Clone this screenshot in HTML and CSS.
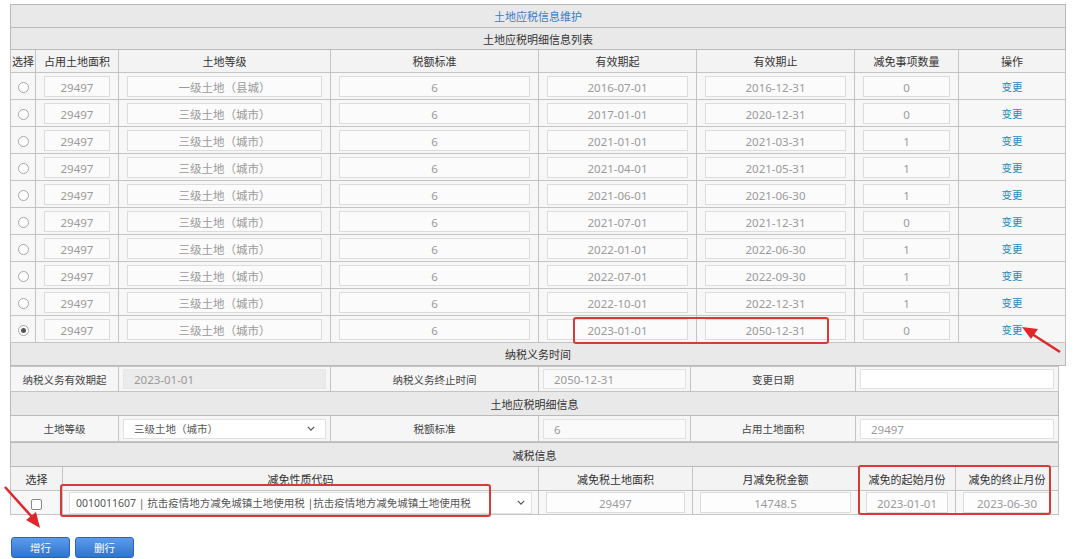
FILE: index.html
```html
<!DOCTYPE html>
<html lang="zh">
<head>
<meta charset="utf-8">
<link rel="stylesheet" href="styles.css">
</head>
<body>
<div class="page">
  <table class="grid top">
    <colgroup>
      <col style="width:25px"><col style="width:83px"><col style="width:212px"><col style="width:208px">
      <col style="width:158px"><col style="width:158px"><col style="width:104px"><col style="width:107px">
    </colgroup>
    <tr class="title"><td colspan="8"><span class="blue">土地应税信息维护</span></td></tr>
    <tr class="sub"><td colspan="8">土地应税明细信息列表</td></tr>
    <tr class="head">
      <td>选择</td><td>占用土地面积</td><td>土地等级</td><td>税额标准</td><td>有效期起</td><td>有效期止</td><td>减免事项数量</td><td>操作</td>
    </tr>
    <tr class="row"><td><span class="radio"></span></td><td><div class="box">29497</div></td><td><div class="box">一级土地（县城）</div></td><td><div class="box">6</div></td><td><div class="box">2016-07-01</div></td><td><div class="box">2016-12-31</div></td><td><div class="box">0</div></td><td><a class="link">变更</a></td></tr>
    <tr class="row"><td><span class="radio"></span></td><td><div class="box">29497</div></td><td><div class="box">三级土地（城市）</div></td><td><div class="box">6</div></td><td><div class="box">2017-01-01</div></td><td><div class="box">2020-12-31</div></td><td><div class="box">0</div></td><td><a class="link">变更</a></td></tr>
    <tr class="row"><td><span class="radio"></span></td><td><div class="box">29497</div></td><td><div class="box">三级土地（城市）</div></td><td><div class="box">6</div></td><td><div class="box">2021-01-01</div></td><td><div class="box">2021-03-31</div></td><td><div class="box">1</div></td><td><a class="link">变更</a></td></tr>
    <tr class="row"><td><span class="radio"></span></td><td><div class="box">29497</div></td><td><div class="box">三级土地（城市）</div></td><td><div class="box">6</div></td><td><div class="box">2021-04-01</div></td><td><div class="box">2021-05-31</div></td><td><div class="box">1</div></td><td><a class="link">变更</a></td></tr>
    <tr class="row"><td><span class="radio"></span></td><td><div class="box">29497</div></td><td><div class="box">三级土地（城市）</div></td><td><div class="box">6</div></td><td><div class="box">2021-06-01</div></td><td><div class="box">2021-06-30</div></td><td><div class="box">1</div></td><td><a class="link">变更</a></td></tr>
    <tr class="row"><td><span class="radio"></span></td><td><div class="box">29497</div></td><td><div class="box">三级土地（城市）</div></td><td><div class="box">6</div></td><td><div class="box">2021-07-01</div></td><td><div class="box">2021-12-31</div></td><td><div class="box">0</div></td><td><a class="link">变更</a></td></tr>
    <tr class="row"><td><span class="radio"></span></td><td><div class="box">29497</div></td><td><div class="box">三级土地（城市）</div></td><td><div class="box">6</div></td><td><div class="box">2022-01-01</div></td><td><div class="box">2022-06-30</div></td><td><div class="box">1</div></td><td><a class="link">变更</a></td></tr>
    <tr class="row"><td><span class="radio"></span></td><td><div class="box">29497</div></td><td><div class="box">三级土地（城市）</div></td><td><div class="box">6</div></td><td><div class="box">2022-07-01</div></td><td><div class="box">2022-09-30</div></td><td><div class="box">1</div></td><td><a class="link">变更</a></td></tr>
    <tr class="row"><td><span class="radio"></span></td><td><div class="box">29497</div></td><td><div class="box">三级土地（城市）</div></td><td><div class="box">6</div></td><td><div class="box">2022-10-01</div></td><td><div class="box">2022-12-31</div></td><td><div class="box">1</div></td><td><a class="link">变更</a></td></tr>
    <tr class="row"><td><span class="radio on"></span></td><td><div class="box">29497</div></td><td><div class="box">三级土地（城市）</div></td><td><div class="box">6</div></td><td><div class="box">2023-01-01</div></td><td><div class="box">2050-12-31</div></td><td><div class="box">0</div></td><td><a class="link">变更</a></td></tr>
    <tr class="sub sec"><td colspan="8">纳税义务时间</td></tr>
  </table>

  <table class="grid mid">
    <colgroup>
      <col style="width:108px"><col style="width:212px"><col style="width:208px"><col style="width:152px"><col style="width:165px"><col style="width:203px">
    </colgroup>
    <tr class="form r1">
      <td class="lbl">纳税义务有效期起</td><td><div class="field dis">2023-01-01</div></td>
      <td class="lbl">纳税义务终止时间</td><td><div class="field lite">2050-12-31</div></td>
      <td class="lbl">变更日期</td><td><div class="field white"></div></td>
    </tr>
    <tr class="sub sec2"><td colspan="6">土地应税明细信息</td></tr>
    <tr class="form r2">
      <td class="lbl">土地等级</td><td><div class="field white sel"><span>三级土地（城市）</span><svg class="chev" viewBox="0 0 10 6" width="8" height="5"><polyline points="1,1 5,5 9,1" fill="none" stroke="#555" stroke-width="1.6"/></svg></div></td>
      <td class="lbl">税额标准</td><td><div class="field lite">6</div></td>
      <td class="lbl">占用土地面积</td><td><div class="field white">29497</div></td>
    </tr>
  </table>

  <table class="grid low">
    <colgroup>
      <col style="width:52px"><col style="width:476px"><col style="width:154px"><col style="width:166px"><col style="width:97px"><col style="width:103px">
    </colgroup>
    <tr class="sub sec2"><td colspan="6">减税信息</td></tr>
    <tr class="head h2">
      <td>选择</td><td>减免性质代码</td><td>减免税土地面积</td><td>月减免税金额</td><td>减免的起始月份</td><td>减免的终止月份</td>
    </tr>
    <tr class="row r3">
      <td><span class="check"></span></td>
      <td><div class="field white sel code"><span>0010011607 | 抗击疫情地方减免城镇土地使用税 |抗击疫情地方减免城镇土地使用税</span><svg class="chev" viewBox="0 0 10 6" width="8" height="5"><polyline points="1,1 5,5 9,1" fill="none" stroke="#555" stroke-width="1.6"/></svg></div></td>
      <td><div class="box">29497</div></td>
      <td><div class="box">14748.5</div></td>
      <td><div class="box">2023-01-01</div></td>
      <td><div class="box">2023-06-30</div></td>
    </tr>
  </table>

  <div class="actions">
    <button class="btn">增行</button>
    <button class="btn">删行</button>
  </div>

  <div class="mark m1"></div>
  <div class="mark m2"></div>
  <div class="mark m3"></div>
  <svg class="arrow a1" width="50" height="36" viewBox="0 0 50 36"><line x1="42" y1="30" x2="14" y2="12" stroke="#e0262a" stroke-width="2.5"/><polygon points="4,5 20,7 13,17" fill="#e0262a"/></svg>
  <svg class="arrow a2" width="50" height="50" viewBox="0 0 50 50"><line x1="3" y1="3" x2="30" y2="33" stroke="#e0262a" stroke-width="2.5"/><polygon points="38,44 24,36 34,28" fill="#e0262a"/></svg>
</div>
</body>
</html>
```

FILE: styles.css
```css
html, body {
  margin: 0;
  padding: 0;
  background: #fff;
}
body {
  font-family: "Noto Sans", "Noto Sans CJK SC", sans-serif;
  font-size: 11px;
  color: #333;
}
.page {
  position: relative;
  width: 1080px;
  height: 559px;
  padding: 4px 0 0 10px;
  box-sizing: border-box;
}
.grid {
  border-collapse: collapse;
  table-layout: fixed;
}
.grid td {
  border: 1px solid #c4c4c4;
  padding: 0;
  text-align: center;
  vertical-align: middle;
  overflow: hidden;
  white-space: nowrap;
}
.top { width: 1055px; }
.mid, .low { width: 1048px; }

.title td {
  height: 22px;
  background: #e9e9e9;
  border-color: #b9b9b9;
}
.blue { color: #3a7cc0; }
.sub td {
  height: 21px;
  background: #e9e9e9;
  border-color: #b9b9b9;
  color: #333;
}
.sec td { height: 22px; }
.sec2 td { height: 23px; }
.head td {
  height: 22px;
  background: #f3f3f3;
  color: #333;
}
.head.h2 td { height: 23px; }
.top .head td:nth-child(n+2),
.top .row td:nth-child(n+2) { border-left-color: #8d8d8d; }
.row td {
  height: 26px;
  background: #f7f7f7;
  padding: 0 8px;
}
.row td:first-child { padding: 0; }
.box {
  height: 21px;
  line-height: 21px;
  border: 1px solid #dcdcdc;
  background: #fbfbfb;
  color: #9a9a9a;
  font-size: 11.5px;
  box-sizing: border-box;
  text-align: center;
}
.radio {
  display: inline-block;
  width: 9px;
  height: 9px;
  border: 1px solid #a8a8a8;
  border-radius: 50%;
  background: #fff;
  vertical-align: middle;
  position: relative;
}
.radio.on::after {
  content: "";
  position: absolute;
  left: 2px; top: 2px;
  width: 5px; height: 5px;
  border-radius: 50%;
  background: #555;
}
.check {
  display: inline-block;
  width: 9px;
  height: 9px;
  border: 1px solid #888;
  border-radius: 2px;
  background: #fff;
  vertical-align: middle;
}
.link {
  color: #2a8ab8;
  font-size: 10.5px;
}

.form td { background: #f6f6f6; }
.form.r1 td { height: 24px; }
.form.r2 td { height: 25px; }
.form td:nth-child(even) { padding: 0 4px; }
.lbl { color: #444; font-size: 10.5px; }
.field {
  height: 20px;
  line-height: 20px;
  text-align: left;
  padding: 0 10px;
  color: #9a9a9a;
  font-size: 11.5px;
  box-sizing: border-box;
  border: 1px solid #e2e2e2;
}
.field.dis { background: #ebebeb; border-color: #e6e6e6; }
.field.lite { background: #fafafa; }
.field.white { background: #fff; }
.sel {
  display: flex;
  align-items: center;
  justify-content: space-between;
  color: #555;
  font-size: 10.5px;
}
.chev { flex: none; margin-right: 0; }
.form td:last-child { padding: 0 4px 0 4px; }

.r3 td { height: 23px; background: #f7f7f7; padding: 0 7px; }
.r3 td:nth-child(2) { padding: 0 6px; }
.r3 .box { background: #fdfdfd; }
.code { padding: 0 6px; height: 22px; color: #555; }

.actions {
  display: flex;
  gap: 5px;
  margin-top: 22px;
  padding-left: 1px;
}
.btn {
  width: 59px;
  height: 21px;
  border: 1px solid #2865b8;
  border-radius: 3px;
  background: linear-gradient(#5c9be6, #2f74d3);
  color: #fff;
  font-family: "Noto Sans CJK SC", sans-serif;
  font-size: 10.5px;
  padding: 0;
}

.mark {
  position: absolute;
  border: 2px solid #d93a35;
  border-radius: 3px;
  box-sizing: border-box;
}
.m1 { left: 573px; top: 317px; width: 256px; height: 27px; }
.m2 { left: 60px; top: 484px; width: 431px; height: 33px; }
.m3 { left: 858px; top: 465px; width: 193px; height: 50px; }
.arrow { position: absolute; }
.a1 { left: 1018px; top: 322px; }
.a2 { left: 2px; top: 484px; }
```
